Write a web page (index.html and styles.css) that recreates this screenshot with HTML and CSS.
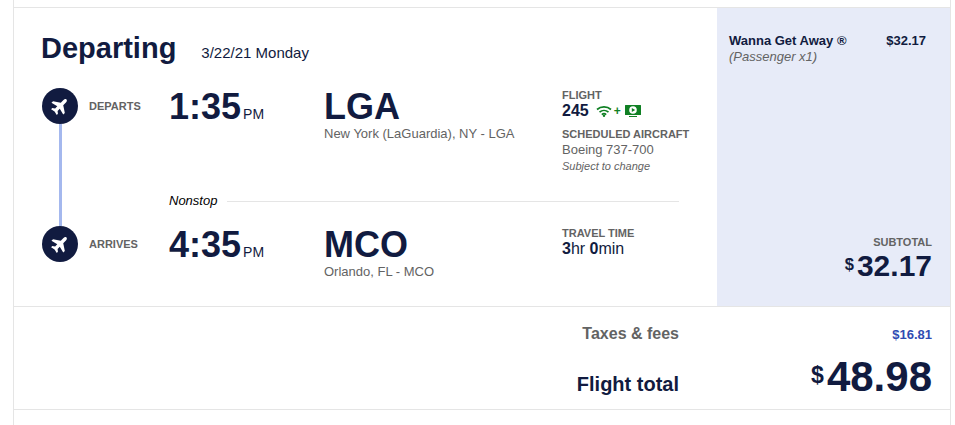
FILE: index.html
```html
<!DOCTYPE html>
<html lang="en">
<head>
    <meta charset="utf-8">
    <title>Flight price</title>
    <link rel="stylesheet" href="styles.css">
</head>
<body>
    <svg class="symbols" aria-hidden="true">
        <symbol id="plane" viewBox="0 0 24 24">
            <path d="M12 1c-1.300 0-2.100 1.500-2.100 3v4.600L2 13.800v2.700l7.900-2v3.700L7.200 20.300v2L12 21.200l4.800 1.100v-2l-2.700-2.100v-3.700l7.900 2v-2.700l-7.900-5.200V4c0-1.500-.8-3-2.100-3z" transform="rotate(45 12 12)"/>
        </symbol>
    </svg>
    <main class="panel">
        <section class="bound">
            <div class="itinerary">
                <header class="heading">
                    <h2>Departing</h2>
                    <span class="date">3/22/21 Monday</span>
                </header>
                <div class="trip">
                    <div class="timeline">
                        <span class="stop"><svg><use href="#plane"/></svg></span>
                        <span class="track"></span>
                        <span class="stop"><svg><use href="#plane"/></svg></span>
                    </div>

                    <div class="label point">DEPARTS</div>
                    <div class="time">1:35<span class="ampm">PM</span></div>
                    <div class="place">
                        <div class="code">LGA</div>
                        <div class="city">New York (LaGuardia), NY - LGA</div>
                    </div>
                    <div class="details">
                        <div class="label">FLIGHT</div>
                        <div class="number">
                            <b>245</b>
                            <svg class="wifi" viewBox="0 0 16 12" role="img" aria-label="WiFi">
                                <path d="M1 4.500a10.500 10.500 0 0 1 14 0M3.500 7.200a6.800 6.800 0 0 1 9 0M5.800 9.600a3.500 3.500 0 0 1 4.400 0"/>
                                <circle cx="8" cy="10.800" r="1.200"/>
                            </svg>
                            <span class="plus">+</span>
                            <svg class="tv" viewBox="0 0 18 12" role="img" aria-label="Live TV">
                                <path d="M1.500 0h15a.5.5 0 0 1 .5.5v9a.5.5 0 0 1-.5.5h-15a.5.5 0 0 1-.5-.5v-9a.5.5 0 0 1 .5-.5zM5 11h8v1H5z"/>
                                <circle cx="9" cy="5" r="3.800"/>
                                <path d="M7.800 3v4l3.400-2z"/>
                            </svg>
                        </div>
                        <div class="label aircraft">SCHEDULED AIRCRAFT</div>
                        <div class="model">Boeing 737-700</div>
                        <div class="note">Subject to change</div>
                    </div>

                    <div class="stops">Nonstop</div>

                    <div class="label point">ARRIVES</div>
                    <div class="time">4:35<span class="ampm">PM</span></div>
                    <div class="place">
                        <div class="code">MCO</div>
                        <div class="city">Orlando, FL - MCO</div>
                    </div>
                    <div class="details">
                        <div class="label">TRAVEL TIME</div>
                        <div class="duration"><b>3</b>hr <b>0</b>min</div>
                    </div>
                </div>
            </div>
            <aside class="fare">
                <div class="fare-row">
                    <div>
                        <div class="fare-name">Wanna Get Away ®</div>
                        <div class="passenger">(Passenger x1)</div>
                    </div>
                    <div class="fare-price">$32.17</div>
                </div>
                <div class="subtotal">
                    <div class="label">SUBTOTAL</div>
                    <div class="amount"><span class="currency">$</span>32.17</div>
                </div>
            </aside>
        </section>
        <section class="totals">
            <div class="total-row">
                <div class="taxes">Taxes &amp; fees</div>
                <div class="price"><a class="taxes-link" href="#">$16.81</a></div>
            </div>
            <div class="total-row">
                <div class="total">Flight total</div>
                <div class="price total-amount"><span class="currency">$</span>48.98</div>
            </div>
        </section>
    </main>
</body>
</html>
```
FILE: styles.css
```css
* {
    box-sizing: border-box;
}
body {
    margin: 0;
    background-color: white;
    color: #111b40;
    font-family: "Liberation Sans", Arial, sans-serif;
    font-size: 13px;
    line-height: 16px;
}
.symbols {
    display: none;
}
.panel {
    min-height: 100vh;
    margin: 0 4px 0 13px;
    padding-top: 7px;
    border: solid #e5e5e5;
    border-width: 0 1px;
}
.bound {
    display: flex;
    border: solid #e5e5e5;
    border-width: 1px 0;
}
.itinerary {
    flex: 1;
    padding: 24px 38px 26px 28px;
}
.heading {
    display: flex;
    align-items: baseline;
    gap: 25px;
    margin-bottom: 24px;
}
h2 {
    margin: 0 0 0 -1px;
    font-size: 29px;
    line-height: 32px;
}
.date {
    font-size: 15px;
}
.trip {
    display: grid;
    grid-template-columns: 36px 91px 155px 1fr 117px;
    grid-template-rows: 88px 50px auto;
}
.timeline {
    grid-row: 1 / 4;
    display: flex;
    flex-direction: column;
    align-items: center;
    padding-bottom: 18px;
}
.stop {
    display: flex;
    align-items: center;
    justify-content: center;
    width: 36px;
    height: 36px;
    border-radius: 50%;
    background-color: #111b40;
}
.stop svg {
    width: 20px;
    height: 20px;
    fill: white;
}
.track {
    flex: 1;
    width: 3px;
    background-color: #a4b8ee;
}
.label {
    color: #636363;
    font-size: 11px;
    font-weight: bold;
    line-height: 14px;
}
.point {
    padding: 11px 0 0 11px;
}
.time, .code {
    font-size: 36px;
    font-weight: bold;
    line-height: 38px;
}
.ampm {
    margin-left: 2px;
    font-size: 14px;
    font-weight: normal;
}
.city {
    color: #636363;
    line-height: 16px;
}
.details {
    white-space: nowrap;
}
.number {
    display: flex;
    align-items: center;
    font-size: 16px;
    line-height: 18px;
}
.wifi {
    width: 16px;
    height: 12px;
    margin-left: 7px;
    fill: #108024;
}
.wifi path {
    fill: none;
    stroke: #108024;
    stroke-width: 1.7;
}
.plus {
    margin: 0 3px 0 2px;
    color: #108024;
    font-size: 12px;
    font-weight: bold;
}
.tv {
    width: 18px;
    height: 12px;
    fill: #108024;
}
.tv circle {
    fill: white;
}
.aircraft {
    margin-top: 7px;
}
.model {
    color: #636363;
    line-height: 18px;
}
.note {
    color: #636363;
    font-size: 11px;
    font-style: italic;
    line-height: 14px;
}
.stops {
    grid-column: 3 / 6;
    display: flex;
    align-items: center;
    gap: 10px;
    color: black;
    font-style: italic;
}
.stops::after {
    content: "";
    flex: 1;
    height: 1px;
    background-color: #e5e5e5;
}
.duration {
    font-size: 16px;
    line-height: 18px;
}
.fare {
    display: flex;
    flex-direction: column;
    justify-content: space-between;
    width: 233px;
    padding: 25px 18px 23px 12px;
    background-color: #e7ebf8;
}
.fare-row {
    display: flex;
    justify-content: space-between;
    padding-right: 6px;
    font-weight: bold;
}
.passenger {
    color: #636363;
    font-style: italic;
    font-weight: normal;
}
.subtotal {
    text-align: right;
}
.amount {
    font-size: 30px;
    font-weight: bold;
    line-height: 34px;
}
.currency {
    margin-right: 3px;
    font-size: 55%;
    line-height: 1;
    vertical-align: 35%;
}
.totals {
    padding: 16px 18px 4px;
    border-bottom: 1px solid #e5e5e5;
}
.total-row {
    display: flex;
    align-items: baseline;
    justify-content: flex-end;
    font-weight: bold;
}
.total-row + .total-row {
    margin-top: 4px;
}
.price {
    width: 253px;
    text-align: right;
}
.taxes {
    color: #636363;
    font-size: 16px;
    line-height: 22px;
}
.taxes-link {
    color: #304cb2;
    text-decoration: none;
}
.total {
    font-size: 20px;
}
.total-amount {
    font-size: 42px;
    line-height: 56px;
}
```
